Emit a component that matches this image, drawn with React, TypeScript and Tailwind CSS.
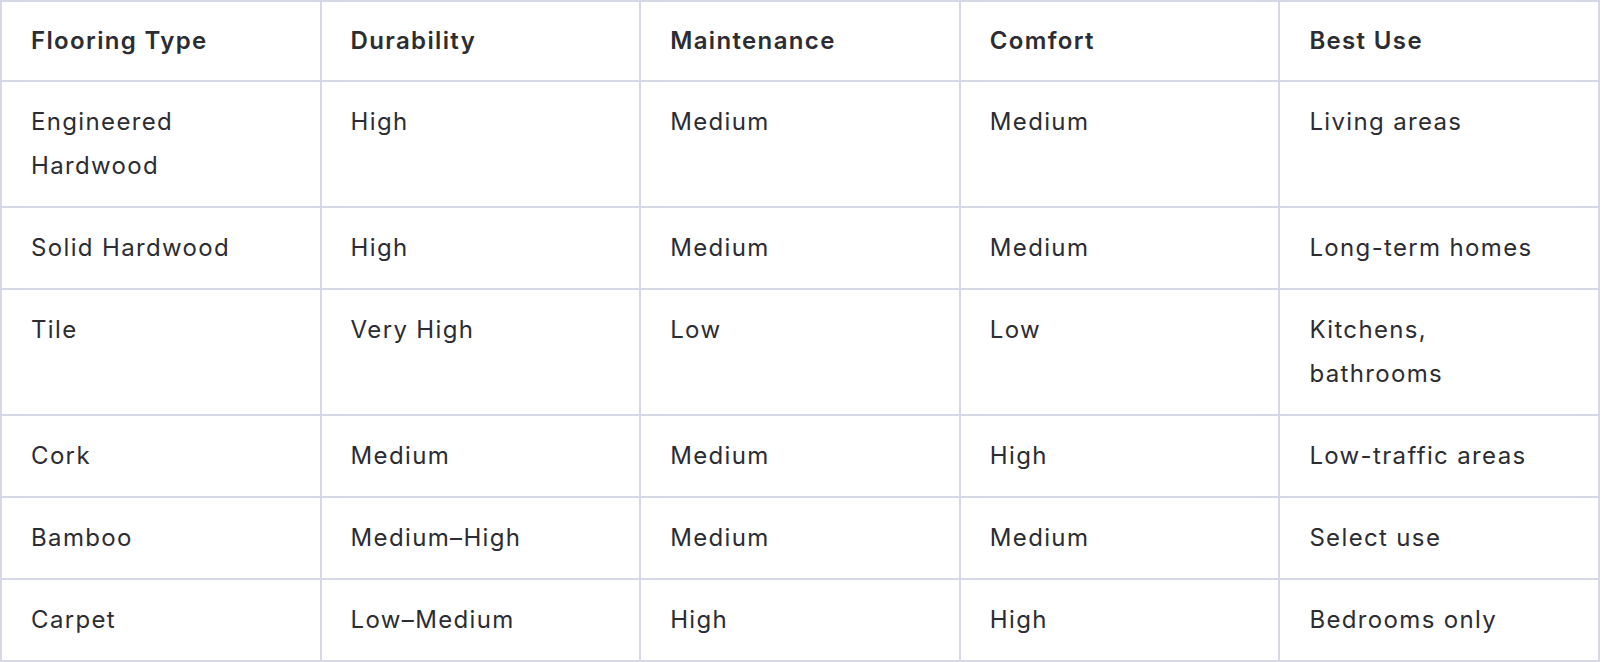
const HEADERS = ['Flooring Type', 'Durability', 'Maintenance', 'Comfort', 'Best Use']

const ROWS: string[][] = [
  ['Engineered Hardwood', 'High', 'Medium', 'Medium', 'Living areas'],
  ['Solid Hardwood', 'High', 'Medium', 'Medium', 'Long-term homes'],
  ['Tile', 'Very High', 'Low', 'Low', 'Kitchens, bathrooms'],
  ['Cork', 'Medium', 'Medium', 'High', 'Low-traffic areas'],
  ['Bamboo', 'Medium–High', 'Medium', 'Medium', 'Select use'],
  ['Carpet', 'Low–Medium', 'High', 'High', 'Bedrooms only'],
]

export default function App() {
  return (
    <div className="min-h-screen bg-white font-['Inter','Noto_Sans',sans-serif] text-[#2c2c33]">
      <table className="w-[1600px] table-fixed border-collapse text-[24px] leading-[44px] tracking-[1.35px]">
        <thead>
          <tr>
            {HEADERS.map((h) => (
              <th
                key={h}
                className="border-2 border-[#d6d8e8] py-[17px] pl-[29px] pr-[40px] text-left align-top font-semibold"
              >
                {h}
              </th>
            ))}
          </tr>
        </thead>
        <tbody>
          {ROWS.map((row) => (
            <tr key={row[0]}>
              {row.map((cell, i) => (
                <td key={i} className="border-2 border-[#d6d8e8] py-[18px] pl-[29px] pr-[40px] align-top">
                  {cell}
                </td>
              ))}
            </tr>
          ))}
        </tbody>
      </table>
    </div>
  )
}
